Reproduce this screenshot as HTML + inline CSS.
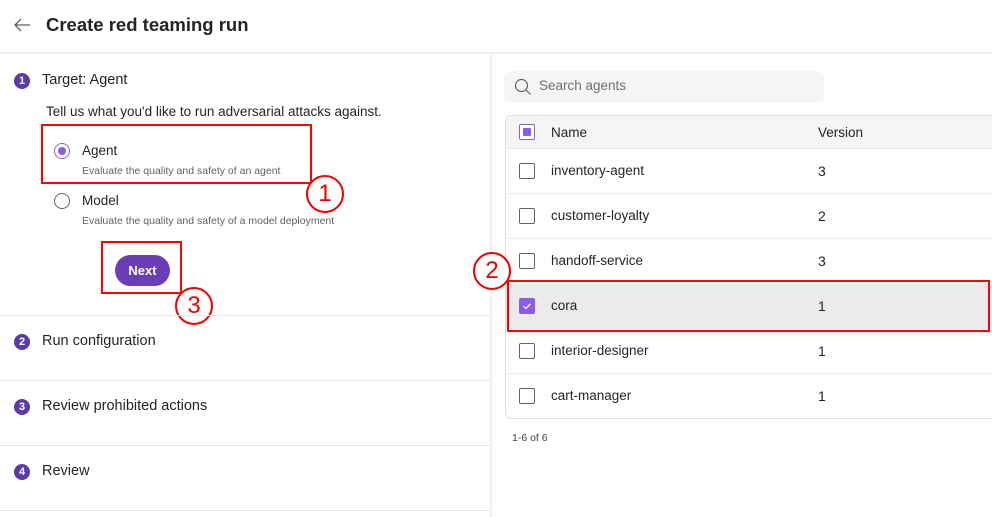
<!DOCTYPE html>
<html><head><style>
*{margin:0;padding:0;box-sizing:border-box}
body{width:992px;height:517px;overflow:hidden;background:#fff;font-family:"Liberation Sans",sans-serif;color:#242424;position:relative}
.a{position:absolute}
.t{font-size:14px;white-space:nowrap}
.num{position:absolute;width:16px;height:16px;border-radius:50%;background:#5b3aa6;color:#fff;font-size:11px;text-align:center;line-height:16px;font-weight:bold}
.hr{position:absolute;left:0;width:490px;height:1px;background:#e6e6e6}
.cb{position:absolute;left:519px;width:16px;height:16px;border:1px solid #616161;border-radius:2px;background:#fff}
.row{position:absolute;left:505px;width:487px;height:45px;border-top:1px solid #e8e8e8}
.red{position:absolute;border:2px solid #f00}
.circ{position:absolute;width:38px;height:38px;border:2px solid #e00;border-radius:50%;color:#e00;font-size:24px;text-align:center;line-height:34px;background:#fff}
</style></head><body>
<svg class="a" style="left:12px;top:15px" width="20" height="20" viewBox="0 0 20 20"><path d="M18 10H3M9 4L3 10L9 16" fill="none" stroke="#616161" stroke-width="1.3"/></svg>
<div class="a" style="left:46px;top:14px;font-size:18.5px;font-weight:bold;color:#242424">Create red teaming run</div>
<div class="a" style="left:0;top:52px;width:992px;height:2px;background:#ededed"></div>
<div class="a" style="left:490px;top:54px;width:2px;height:463px;background:#f0f0f0"></div>

<div class="num" style="left:14px;top:73px">1</div>
<div class="a t" style="left:42px;top:72px;font-size:14.5px">Target: Agent</div>
<div class="a t" style="left:46px;top:104px;font-size:13.5px">Tell us what you'd like to run adversarial attacks against.</div>
<div class="a" style="left:54px;top:143px;width:16px;height:16px;border:1px solid #8a63e8;border-radius:50%"><div style="margin:3px;width:8px;height:8px;border-radius:50%;background:#8a5ce8"></div></div>
<div class="a t" style="left:82px;top:143px;font-size:13.5px">Agent</div>
<div class="a t" style="left:82px;top:165px;font-size:10.5px;color:#616161">Evaluate the quality and safety of an agent</div>
<div class="a" style="left:54px;top:193px;width:16px;height:16px;border:1px solid #616161;border-radius:50%"></div>
<div class="a t" style="left:82px;top:193px;font-size:13.5px">Model</div>
<div class="a t" style="left:82px;top:215px;font-size:10.5px;color:#616161">Evaluate the quality and safety of a model deployment</div>
<div class="a" style="left:115px;top:255px;width:55px;height:31px;border-radius:16px;background:#6a3fb5;color:#fff;font-size:13px;font-weight:bold;text-align:center;line-height:31px">Next</div>
<div class="red" style="left:41px;top:124px;width:271px;height:60px"></div>
<div class="red" style="left:101px;top:241px;width:81px;height:53px"></div>
<div class="circ" style="left:306px;top:175px">1</div>
<div class="circ" style="left:175px;top:287px">3</div>

<div class="hr" style="top:315px"></div>
<div class="num" style="left:14px;top:334px">2</div>
<div class="a t" style="left:42px;top:333px;font-size:14.5px">Run configuration</div>
<div class="hr" style="top:380px"></div>
<div class="num" style="left:14px;top:399px">3</div>
<div class="a t" style="left:42px;top:398px;font-size:14.5px">Review prohibited actions</div>
<div class="hr" style="top:445px"></div>
<div class="num" style="left:14px;top:464px">4</div>
<div class="a t" style="left:42px;top:463px;font-size:14.5px">Review</div>
<div class="hr" style="top:510px"></div>

<div class="a" style="left:504px;top:71px;width:320px;height:32px;border-radius:7px;background:#f5f5f5"></div>
<svg class="a" style="left:514px;top:78px" width="18" height="18" viewBox="0 0 18 18"><circle cx="7.5" cy="7.5" r="6" fill="none" stroke="#616161" stroke-width="1.2"/><path d="M12 12L16.5 16.5" stroke="#616161" stroke-width="1.2"/></svg>
<div class="a t" style="left:539px;top:78px;color:#707070;font-size:13.5px">Search agents</div>

<div class="a" style="left:505px;top:115px;width:500px;height:304px;border:1px solid #e0e0e0;border-radius:6px;overflow:hidden">
<div style="height:33px;background:#f5f5f5;border-bottom:1px solid #e8e8e8"></div>
<div style="position:absolute;top:168px;left:0;width:100%;height:45px;background:#ebebeb"></div>
</div>
<div class="cb" style="top:124px;border-color:#8a5ce8"><div style="margin:3px;width:8px;height:8px;background:#8a5ce8;border-radius:1px"></div></div>
<div class="a t" style="left:551px;top:125px;font-size:13.5px">Name</div>
<div class="a t" style="left:818px;top:125px;font-size:13.5px">Version</div>

<div class="cb" style="top:163px"></div><div class="a t" style="left:551px;top:163px;font-size:13.5px">inventory-agent</div><div class="a t" style="left:818px;top:163px">3</div>
<div class="row" style="top:193px"></div>
<div class="cb" style="top:208px"></div><div class="a t" style="left:551px;top:208px;font-size:13.5px">customer-loyalty</div><div class="a t" style="left:818px;top:208px">2</div>
<div class="row" style="top:238px"></div>
<div class="cb" style="top:253px"></div><div class="a t" style="left:551px;top:253px;font-size:13.5px">handoff-service</div><div class="a t" style="left:818px;top:253px">3</div>
<div class="cb" style="top:298px;background:#8a5ce8;border-color:#8a5ce8"><svg width="14" height="14" viewBox="0 0 14 14" style="display:block"><path d="M3.5 7.2L6 9.5L10.5 4.8" fill="none" stroke="#fff" stroke-width="1.3"/></svg></div>
<div class="a t" style="left:551px;top:298px;font-size:13.5px">cora</div><div class="a t" style="left:818px;top:298px">1</div>
<div class="row" style="top:328px"></div>
<div class="cb" style="top:343px"></div><div class="a t" style="left:551px;top:343px;font-size:13.5px">interior-designer</div><div class="a t" style="left:818px;top:343px">1</div>
<div class="row" style="top:373px"></div>
<div class="cb" style="top:388px"></div><div class="a t" style="left:551px;top:388px;font-size:13.5px">cart-manager</div><div class="a t" style="left:818px;top:388px">1</div>
<div class="a t" style="left:512px;top:432px;font-size:10.5px;color:#424242">1-6 of 6</div>

<div class="red" style="left:507px;top:280px;width:483px;height:52px"></div>
<div class="circ" style="left:473px;top:252px">2</div>
</body></html>
